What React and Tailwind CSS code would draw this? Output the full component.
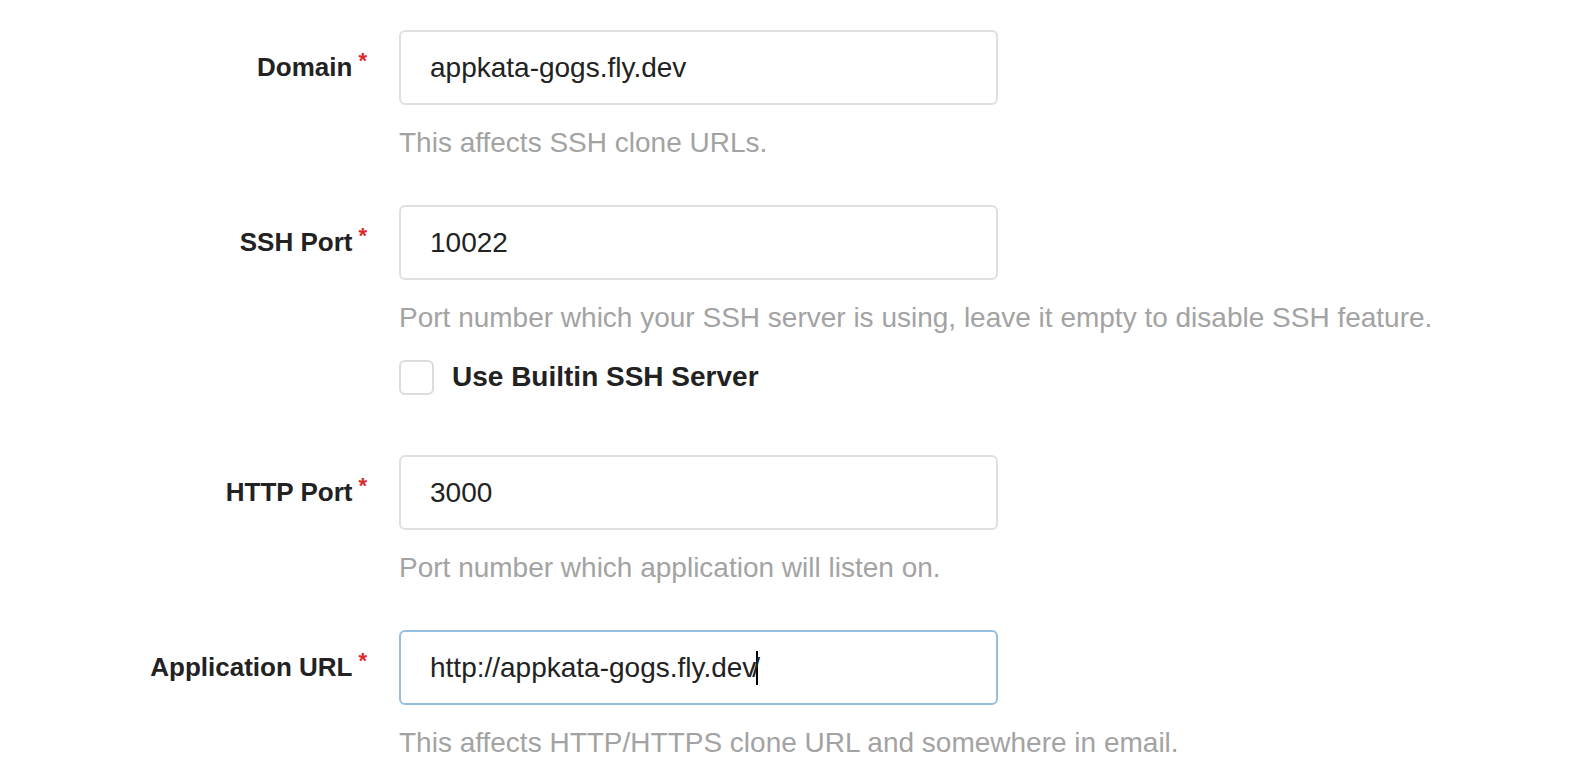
const font = { fontFamily: '"Liberation Sans", Arial, sans-serif' };

function Label({ children }) {
  return (
    <div className="flex h-[74px] w-[399px] shrink-0 items-center justify-end pr-[32px]">
      <span className="text-[26px] font-bold text-[#222]">{children}</span>
      <span className="ml-[6px] -mt-[14px] text-[22px] font-bold text-[#db2828]">*</span>
    </div>
  );
}

function Field({ label, value, focused, help, mt, children }) {
  return (
    <div className={`flex ${mt}`}>
      <Label>{label}</Label>
      <div className="flex flex-col">
        <div
          className={`flex h-[75px] w-[599px] items-center rounded-[6px] border-2 pl-[29px] text-[28px] text-[#222] ${
            focused ? "border-[#96bfdf]" : "border-[#e0e0e0]"
          }`}
        >
          {value}
          {focused && <span className="inline-block h-[34px] w-[2px] bg-black" />}
          {focused && <span className="ml-[-6px]">/</span>}
        </div>
        <div className="mt-[22px] h-[32px] text-[28px] leading-[32px] text-[#a3a3a3] whitespace-nowrap">{help}</div>
        {children}
      </div>
    </div>
  );
}

export default function App() {
  return (
    <div className="h-[778px] w-[1584px] overflow-hidden bg-white" style={font}>
      <div className="pt-[30px]">
        <Field label="Domain" value="appkata-gogs.fly.dev" help="This affects SSH clone URLs." mt="" />
        <Field
          label="SSH Port"
          value="10022"
          help="Port number which your SSH server is using, leave it empty to disable SSH feature."
          mt="mt-[46px]"
        >
          <div className="mt-[22px] flex items-center">
            <div className="h-[35px] w-[35px] rounded-[6px] border-2 border-[#dcdcdc]" />
            <span className="ml-[18px] text-[28px] font-bold text-[#222]">Use Builtin SSH Server</span>
          </div>
        </Field>
        <Field label="HTTP Port" value="3000" help="Port number which application will listen on." mt="mt-[57px]" />
        <Field
          label="Application URL"
          value="http://appkata-gogs.fly.dev"
          focused
          help="This affects HTTP/HTTPS clone URL and somewhere in email."
          mt="mt-[46px]"
        />
      </div>
    </div>
  );
}
